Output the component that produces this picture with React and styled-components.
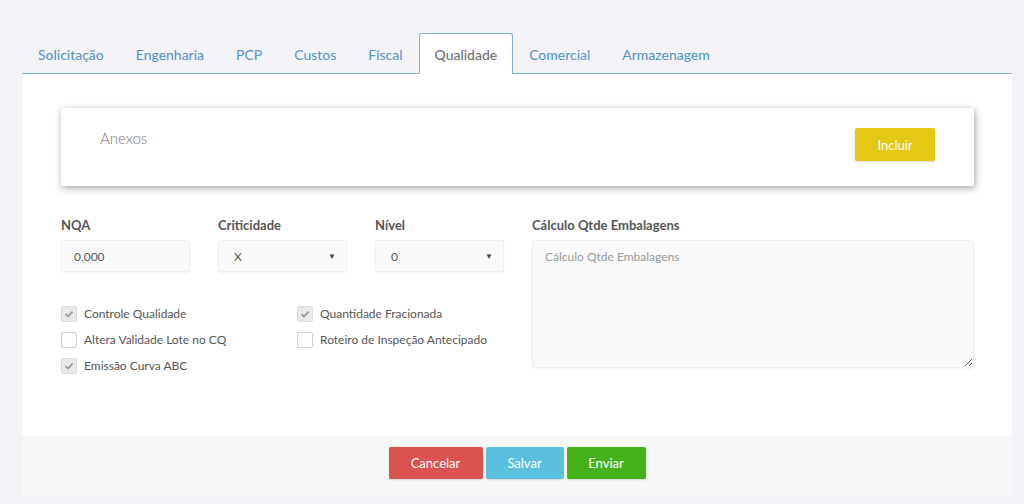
import React from "react";
import styled, { createGlobalStyle } from "styled-components";

const GlobalStyle = createGlobalStyle`
  body {
    margin: 0;
    background: #f3f3f8;
    font-family: Lato, "Open Sans", sans-serif;
    font-size: 13px;
    color: #555;
  }
`;

const tabs = [
  "Solicitação",
  "Engenharia",
  "PCP",
  "Custos",
  "Fiscal",
  "Qualidade",
  "Comercial",
  "Armazenagem",
];

const checks = [
  { label: "Controle Qualidade", checked: true },
  { label: "Quantidade Fracionada", checked: true },
  { label: "Altera Validade Lote no CQ", checked: false },
  { label: "Roteiro de Inspeção Antecipado", checked: false },
  { label: "Emissão Curva ABC", checked: true },
];

function CheckBox({ label, checked }) {
  return (
    <CheckRow>
      <Box $checked={checked}>
        {checked && (
          <svg width="10" height="10" viewBox="0 0 10 10">
            <path
              d="M1.5 5.2 L4 7.5 L8.6 2.6"
              fill="none"
              stroke="#999"
              strokeWidth="1.8"
            />
          </svg>
        )}
      </Box>
      <span>{label}</span>
    </CheckRow>
  );
}

export default function App() {
  return (
    <>
      <GlobalStyle />
      <Page>
        <TabBar>
          {tabs.map((t) => (
            <Tab key={t} $active={t === "Qualidade"}>
              {t}
            </Tab>
          ))}
        </TabBar>
        <Panel>
          <AttachCard>
            <CardTitle>Anexos</CardTitle>
            <Button $color="#e3c814" $w={80} $h={33}>
              Incluir
            </Button>
          </AttachCard>
          <FormGrid>
            <Field>
              <Label>NQA</Label>
              <Input>0,000</Input>
            </Field>
            <Field>
              <Label>Criticidade</Label>
              <Select>
                <span>X</span>
                <Arrow>▼</Arrow>
              </Select>
            </Field>
            <Field>
              <Label>Nível</Label>
              <Select>
                <span>0</span>
                <Arrow>▼</Arrow>
              </Select>
            </Field>
            <Field $rows="span 2">
              <Label>Cálculo Qtde Embalagens</Label>
              <TextArea placeholder="Cálculo Qtde Embalagens" />
            </Field>
            <CheckGrid>
              {checks.map((c) => (
                <CheckBox key={c.label} {...c} />
              ))}
            </CheckGrid>
          </FormGrid>
        </Panel>
        <Footer>
          <Button $color="#d9534f" $w={94} $h={32}>
            Cancelar
          </Button>
          <Button $color="#5bc0de" $w={78} $h={32}>
            Salvar
          </Button>
          <Button $color="#45b21c" $w={79} $h={32}>
            Enviar
          </Button>
        </Footer>
      </Page>
    </>
  );
}

const Page = styled.div`
  width: 990px;
  padding: 33px 0 7px 22px;
`;

const TabBar = styled.div`
  display: flex;
  height: 40px;
  border-bottom: 1px solid #7fb0d6;
`;

const Tab = styled.div`
  display: flex;
  align-items: center;
  padding: 0 15px;
  border: 1px solid ${(p) => (p.$active ? "#7fb0d6" : "transparent")};
  border-bottom: none;
  border-radius: 3px 3px 0 0;
  background: ${(p) => (p.$active ? "#fff" : "transparent")};
  color: ${(p) => (p.$active ? "#666" : "#4f92c8")};
  font-size: 14px;
  margin-bottom: -1px;
  height: 41px;
  box-sizing: border-box;
`;

const Panel = styled.div`
  background: #fff;
  height: 362px;
  padding: 34px 38px 0 39px;
  box-sizing: border-box;
`;

const AttachCard = styled.div`
  display: flex;
  justify-content: space-between;
  align-items: flex-start;
  height: 78px;
  box-sizing: border-box;
  padding: 20px 39px;
  background: #fff;
  border-radius: 2px;
  box-shadow: 1px 2px 7px rgba(60, 40, 40, 0.45);
`;

const CardTitle = styled.div`
  font-size: 15px;
  font-weight: 300;
  color: #777;
  margin-top: 1px;
`;

const Button = styled.div`
  width: ${(p) => p.$w}px;
  height: ${(p) => p.$h}px;
  display: flex;
  align-items: center;
  justify-content: center;
  background: ${(p) => p.$color};
  color: #fff;
  font-size: 13px;
  border-radius: 2px;
  box-shadow: 0 1px 2px rgba(0, 0, 0, 0.15);
`;

const FormGrid = styled.div`
  display: grid;
  grid-template-columns: 129px 129px 129px 1fr;
  grid-template-rows: auto auto;
  column-gap: 28px;
  margin-top: 30px;
`;

const Field = styled.div`
  display: flex;
  flex-direction: column;
  grid-row: ${(p) => p.$rows || "auto"};
`;

const Label = styled.div`
  font-weight: 700;
  font-size: 13px;
  color: #555;
  line-height: 18px;
  margin-bottom: 6px;
`;

const controlBase = `
  box-sizing: border-box;
  background: #fafafa;
  border: 1px solid #efefef;
  box-shadow: 0 1px 2px rgba(0, 0, 0, 0.06);
  border-radius: 2px;
  font-size: 12px;
  color: #555;
`;

const Input = styled.div`
  ${controlBase}
  height: 32px;
  display: flex;
  align-items: center;
  padding: 0 12px;
`;

const Select = styled.div`
  ${controlBase}
  height: 32px;
  display: flex;
  align-items: center;
  justify-content: space-between;
  padding: 0 10px 0 15px;
`;

const Arrow = styled.span`
  font-size: 8px;
  color: #444;
`;

const TextArea = styled.textarea`
  ${controlBase}
  height: 128px;
  padding: 8px 12px;
  font-family: Lato, "Open Sans", sans-serif;
  resize: vertical;
  outline: none;
  &::placeholder {
    color: #999;
  }
`;

const CheckGrid = styled.div`
  grid-column: 1 / 4;
  display: grid;
  grid-template-columns: 236px 1fr;
  row-gap: 9px;
  margin-top: 33px;
  align-content: start;
`;

const CheckRow = styled.div`
  display: flex;
  align-items: center;
  gap: 7px;
  font-size: 12px;
  color: #555;
  height: 17px;
`;

const Box = styled.div`
  width: 16px;
  height: 16px;
  box-sizing: border-box;
  border: 1px solid ${(p) => (p.$checked ? "#dcdcdc" : "#cfcfcf")};
  background: ${(p) => (p.$checked ? "#e9e9e9" : "#fff")};
  border-radius: 2px;
  display: flex;
  align-items: center;
  justify-content: center;
`;

const Footer = styled.div`
  margin-top: 1px;
  height: 60px;
  background: #f8f8f8;
  border-radius: 2px;
  display: flex;
  justify-content: center;
  align-items: flex-start;
  padding-top: 10px;
  box-sizing: border-box;
  gap: 3px;
`;
